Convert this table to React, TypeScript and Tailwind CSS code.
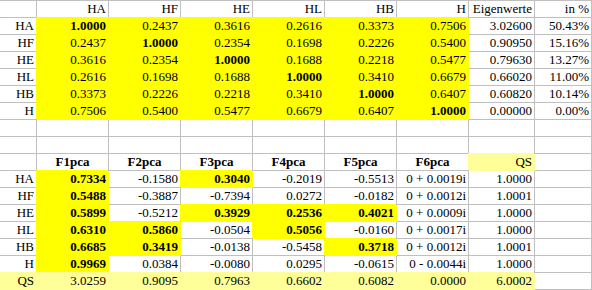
import React from "react";

type Fill = "none" | "yellow" | "light";
type Cell = { t: string; fill?: Fill; bold?: boolean; center?: boolean };

const HEAD = ["HA", "HF", "HE", "HL", "HB", "H"];

// correlation matrix + eigenvalues
const CORR: [string, string[], string, string][] = [
  ["HA", ["1.0000", "0.2437", "0.3616", "0.2616", "0.3373", "0.7506"], "3.02600", "50.43%"],
  ["HF", ["0.2437", "1.0000", "0.2354", "0.1698", "0.2226", "0.5400"], "0.90950", "15.16%"],
  ["HE", ["0.3616", "0.2354", "1.0000", "0.1688", "0.2218", "0.5477"], "0.79630", "13.27%"],
  ["HL", ["0.2616", "0.1698", "0.1688", "1.0000", "0.3410", "0.6679"], "0.66020", "11.00%"],
  ["HB", ["0.3373", "0.2226", "0.2218", "0.3410", "1.0000", "0.6407"], "0.60820", "10.14%"],
  ["H", ["0.7506", "0.5400", "0.5477", "0.6679", "0.6407", "1.0000"], "0.00000", "0.00%"],
];

// loadings; mask marks the highlighted (bold) ones for F1..F5
const LOAD: [string, string[], number[], string, string][] = [
  ["HA", ["0.7334", "-0.1580", "0.3040", "-0.2019", "-0.5513"], [1, 0, 1, 0, 0], "0 + 0.0019i", "1.0000"],
  ["HF", ["0.5488", "-0.3887", "-0.7394", "0.0272", "-0.0182"], [1, 0, 0, 0, 0], "0 + 0.0012i", "1.0001"],
  ["HE", ["0.5899", "-0.5212", "0.3929", "0.2536", "0.4021"], [1, 0, 1, 1, 1], "0 + 0.0009i", "1.0000"],
  ["HL", ["0.6310", "0.5860", "-0.0504", "0.5056", "-0.0160"], [1, 1, 0, 1, 0], "0 + 0.0017i", "1.0000"],
  ["HB", ["0.6685", "0.3419", "-0.0138", "-0.5458", "0.3718"], [1, 1, 0, 0, 1], "0 + 0.0012i", "1.0001"],
  ["H", ["0.9969", "0.0384", "-0.0080", "0.0295", "-0.0615"], [1, 0, 0, 0, 0], "0 - 0.0044i", "1.0000"],
];

const QS = ["QS", "3.0259", "0.9095", "0.7963", "0.6602", "0.6082", "0.0000", "6.0002"];

const empty = (): Cell[] => Array.from({ length: 9 }, () => ({ t: "" }));

function buildRows(): Cell[][] {
  const rows: Cell[][] = [];
  rows.push([{ t: "" }, ...HEAD.map((t) => ({ t })), { t: "Eigenwerte" }, { t: "in %" }]);
  CORR.forEach(([label, vals, ev, pct], r) => {
    rows.push([
      { t: label },
      ...vals.map((t, c): Cell => ({ t, fill: "yellow", bold: c === r })),
      { t: ev },
      { t: pct },
    ]);
  });
  rows.push(empty(), empty());
  rows.push([
    { t: "" },
    ...["F1pca", "F2pca", "F3pca", "F4pca", "F5pca", "F6pca"].map((t): Cell => ({ t, bold: true, center: true })),
    { t: "QS", fill: "light" },
    { t: "" },
  ]);
  LOAD.forEach(([label, vals, mask, f6, qs]) => {
    rows.push([
      { t: label },
      ...vals.map((t, c): Cell => (mask[c] ? { t, fill: "yellow", bold: true } : { t })),
      { t: f6 },
      { t: qs },
      { t: "" },
    ]);
  });
  rows.push([...QS.map((t): Cell => ({ t, fill: "light" })), { t: "" }]);
  return rows;
}

const fillClass: Record<Fill, string> = {
  none: "border-[#c0c0c0] bg-white",
  // filled cells cover the gridlines round them, like Excel does
  yellow: "relative z-10 bg-[#ffff00] border-[#ffff00] shadow-[-1px_-1px_0_0_#ffff00]",
  light: "relative z-10 bg-[#ffff99] border-[#ffff99] shadow-[-1px_-1px_0_0_#ffff99]",
};

export default function App() {
  const rows = buildRows();
  return (
    <div className="w-[592px] h-[290px] bg-white overflow-hidden font-['Liberation_Serif','Times_New_Roman',serif] text-[13px] text-black">
      <div className="grid grid-cols-[37px_repeat(6,72px)_66px_57px] auto-rows-[17px] border-t border-[#c0c0c0]">
        {rows.map((row, r) =>
          row.map((cell, c) => (
            <div
              key={`${r}-${c}`}
              className={`border-r border-b pr-[2px] pl-[2px] leading-[16px] whitespace-nowrap overflow-hidden ${
                fillClass[cell.fill ?? "none"]
              } ${cell.bold ? "font-bold" : ""} ${cell.center ? "text-center" : "text-right"}`}
            >
              {cell.t}
            </div>
          ))
        )}
      </div>
    </div>
  );
}
